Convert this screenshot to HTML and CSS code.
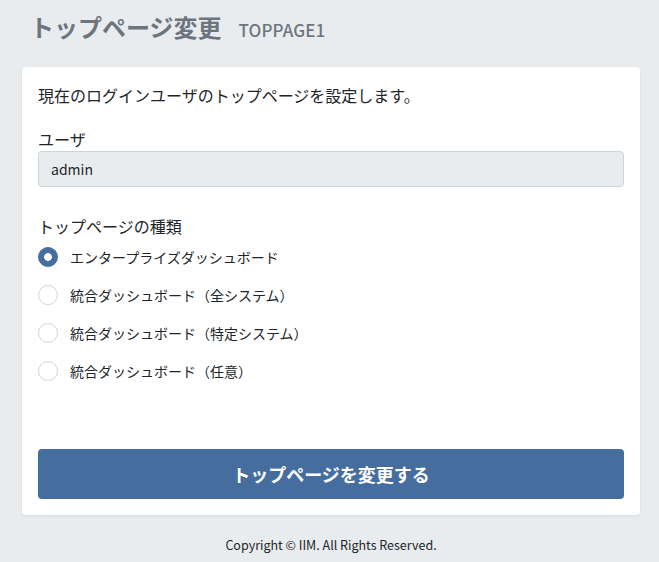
FILE: index.html
```
<!DOCTYPE html>
<html lang="ja">
<head>
    <meta charset="UTF-8">
    <meta name="viewport" content="width=device-width, initial-scale=1.0">
    <title>トップページ変更</title>
    <link rel="stylesheet" href="styles.css">
</head>
<body>

    <header class="page-header">
        <h1>トップページ変更</h1>
        <span class="page-id">TOPPAGE1</span>
    </header>

    <main class="card">
        <p class="lead">現在のログインユーザのトップページを設定します。</p>

        <div class="field">
            <label class="field-label" for="user">ユーザ</label>
            <input class="field-input" id="user" type="text" value="admin" readonly>
        </div>

        <div class="field field-radios">
            <div class="field-label">トップページの種類</div>
            <label class="radio-row">
                <input type="radio" name="toppage" value="enterprise" checked>
                <span>エンタープライズダッシュボード</span>
            </label>
            <label class="radio-row">
                <input type="radio" name="toppage" value="all">
                <span>統合ダッシュボード（全システム）</span>
            </label>
            <label class="radio-row">
                <input type="radio" name="toppage" value="system">
                <span>統合ダッシュボード（特定システム）</span>
            </label>
            <label class="radio-row">
                <input type="radio" name="toppage" value="any">
                <span>統合ダッシュボード（任意）</span>
            </label>
        </div>

        <button class="submit" type="button">トップページを変更する</button>
    </main>

    <footer class="footer">Copyright © IIM. All Rights Reserved.</footer>

</body>
</html>
```

FILE: styles.css
```
body {
    font-family: "Noto Sans CJK JP", "Noto Sans", sans-serif;
    margin: 0;
    padding: 0 19px 0 22px;
    background: #e9ecef;
    color: #212529;
}

.page-header {
    display: flex;
    align-items: baseline;
    height: 67px;
    box-sizing: border-box;
    padding: 11px 0 0 8px;
    color: #6c757d;
}

.page-header h1 {
    margin: 0;
    font-size: 24px;
    line-height: 32px;
    font-weight: bold;
}

.page-id {
    margin-left: 17px;
    font-size: 17px;
    font-weight: 500;
    letter-spacing: 0.1px;
}

.card {
    background: white;
    border-radius: 4px;
    padding: 16px 16px 16px;
    box-shadow: 0 1px 3px rgba(0, 0, 0, 0.08);
}

.lead {
    margin: 0;
    font-size: 16px;
    line-height: 24px;
}

.field {
    margin-top: 21px;
}

.field-radios {
    margin-top: 28px;
}

.field-label {
    display: block;
    font-size: 16px;
    line-height: 23px;
}

.field-input {
    display: block;
    width: 100%;
    box-sizing: border-box;
    height: 36px;
    padding: 0 12px;
    font-family: inherit;
    font-size: 14px;
    color: #212529;
    background: #e9ecef;
    border: 1px solid #ced4da;
    border-radius: 4px;
    outline: none;
}

.radio-row {
    display: flex;
    align-items: center;
    height: 38px;
    font-size: 14px;
}

.radio-row input {
    appearance: none;
    width: 20px;
    height: 20px;
    margin: 0 12px 0 0;
    border: 1px solid #ced4da;
    border-radius: 50%;
    background: white;
}

.radio-row input:checked {
    border-color: #456d9e;
    background: radial-gradient(circle, white 0 3.5px, #456d9e 4.2px);
}

.submit {
    display: block;
    width: 100%;
    height: 50px;
    margin-top: 59px;
    background: #456d9e;
    color: white;
    border: none;
    border-radius: 4px;
    font-family: inherit;
    font-size: 18px;
    font-weight: bold;
    cursor: pointer;
}

.footer {
    margin-top: 20px;
    text-align: center;
    font-size: 12.5px;
    line-height: 20px;
}
```
